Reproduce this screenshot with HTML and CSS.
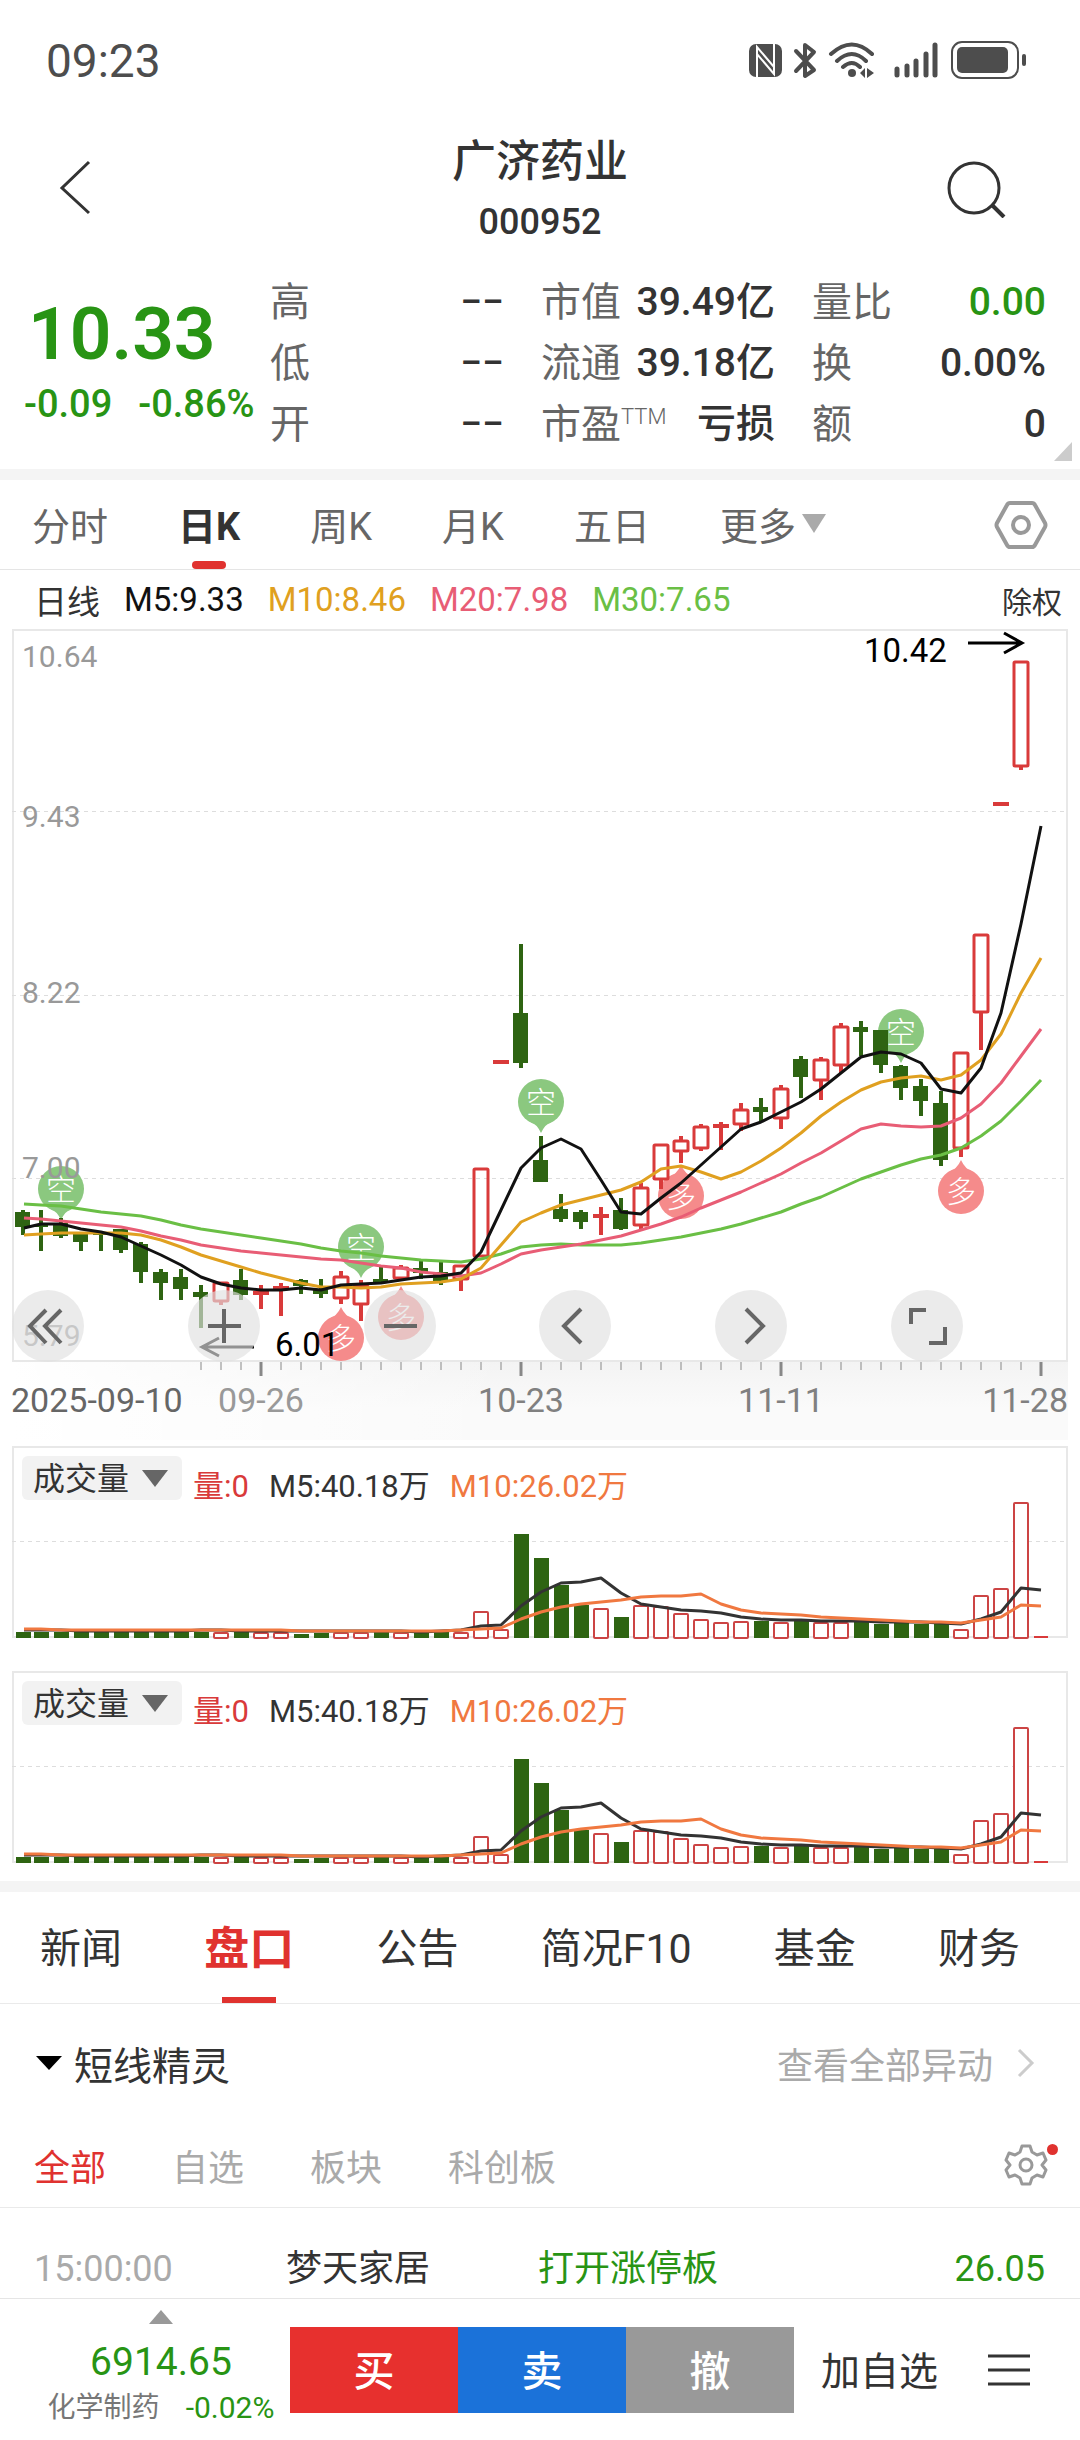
FILE: index.html
```
<!DOCTYPE html>
<html lang="zh-CN">
<head>
    <meta charset="UTF-8">
    <meta name="viewport" content="width=device-width, initial-scale=1.0">
    <title>广济药业 000952</title>
    <link rel="stylesheet" href="styles.css">
</head>
<body>
    <div class="status-bar">
        <span class="clock">09:23</span>
        <svg class="status-icons" width="280" height="42" viewBox="748 40 280 42" aria-hidden="true">
            <rect x="749" y="44" width="33" height="33" rx="7" fill="#4d4d4d"/>
            <path d="M757 78V47L774 67V54M774 43V74L757 54V67" fill="none" stroke="#fff" stroke-width="2"/>
            <path d="M796 51L814 70L805 76V45L814 52L796 71" fill="none" stroke="#4d4d4d" stroke-width="4" stroke-linejoin="round" stroke-linecap="round"/>
            <path d="M831 54Q852 35 872 54M837 61Q852 47 866 61M843 67Q852 59 860 67" fill="none" stroke="#4d4d4d" stroke-width="4" stroke-linecap="round"/>
            <circle cx="852" cy="73" r="4" fill="#4d4d4d"/>
            <path d="M860 73L865 68V78ZM867 68V78L874 73Z" fill="#4d4d4d"/>
            <path d="M897 69V75M907 66V75M916 61V75M926 54V75M935 45V75" stroke="#4d4d4d" stroke-width="5" stroke-linecap="round"/>
            <rect x="952" y="42" width="66" height="36" rx="10" fill="none" stroke="#4d4d4d" stroke-width="2"/>
            <rect x="957" y="47" width="51" height="26" rx="5" fill="#4d4d4d"/>
            <rect x="1022" y="54" width="4" height="12" rx="2" fill="#4d4d4d"/>
        </svg>
    </div>

    <header class="header">
        <button class="icon-button" aria-label="返回">
            <svg width="34" height="56" viewBox="0 0 34 56"><path d="M31 3L4 29L31 54" fill="none" stroke="#333" stroke-width="3"/></svg>
        </button>
        <div class="title">
            <h1>广济药业</h1>
            <p>000952</p>
        </div>
        <button class="icon-button" aria-label="搜索">
            <svg width="62" height="62" viewBox="0 0 62 62"><circle cx="28" cy="32" r="25" fill="none" stroke="#333" stroke-width="3"/><path d="M46 49L58 61" stroke="#333" stroke-width="4"/></svg>
        </button>
    </header>

    <section class="quote">
        <div class="price-box">
            <div class="price">10.33</div>
            <div class="change"><span>-0.09</span><span>-0.86%</span></div>
        </div>
        <dl class="stats">
            <div><dt>高</dt><dd>−−</dd></div>
            <div><dt>市值</dt><dd>39.49亿</dd></div>
            <div><dt>量比</dt><dd class="down">0.00</dd></div>
            <div><dt>低</dt><dd>−−</dd></div>
            <div><dt>流通</dt><dd>39.18亿</dd></div>
            <div><dt>换</dt><dd>0.00%</dd></div>
            <div><dt>开</dt><dd>−−</dd></div>
            <div><dt>市盈<sup>TTM</sup></dt><dd>亏损</dd></div>
            <div><dt>额</dt><dd>0</dd></div>
        </dl>
        <span class="corner"></span>
    </section>

    <nav class="period-tabs">
        <button>分时</button>
        <button class="active">日K</button>
        <button>周K</button>
        <button>月K</button>
        <button>五日</button>
        <button>更多<span class="caret"></span></button>
        <button class="settings" aria-label="设置">
            <svg width="54" height="50" viewBox="0 0 54 50"><path d="M16 3H38Q40 3 41 5L51 23Q52 25 51 27L41 45Q40 47 38 47H16Q14 47 13 45L3 27Q2 25 3 23L13 5Q14 3 16 3Z" fill="none" stroke="#999" stroke-width="4"/><circle cx="27" cy="25" r="8" fill="none" stroke="#999" stroke-width="4"/></svg>
        </button>
    </nav>

    <div class="ma-row">
        <span>日线</span>
        <span class="ma5">M5:9.33</span>
        <span class="ma10">M10:8.46</span>
        <span class="ma20">M20:7.98</span>
        <span class="ma30">M30:7.65</span>
        <button>除权</button>
    </div>

    <div class="chart">
        <svg id="kline" viewBox="12 629 1056 811"></svg>
        <div class="chart-tools">
            <button aria-label="最左"><svg viewBox="0 0 72 72"><path d="M34 20L18 36L34 53M49 20L33 36L49 53"/></svg></button>
            <button aria-label="放大"><svg viewBox="0 0 72 72"><path d="M20 36H53M36 19V53"/></svg></button>
            <button aria-label="缩小"><svg viewBox="0 0 72 72"><path d="M20 36H53"/></svg></button>
            <button aria-label="左移"><svg viewBox="0 0 72 72"><path d="M42 19L25 36L42 53"/></svg></button>
            <button aria-label="右移"><svg viewBox="0 0 72 72"><path d="M31 19L48 36L31 53"/></svg></button>
            <button aria-label="全屏"><svg viewBox="0 0 72 72"><path d="M20 34V20H35M54 37V53H38"/></svg></button>
        </div>
    </div>

    <div class="volume">
        <svg class="volume-chart" viewBox="12 1446 1056 194"></svg>
        <div class="volume-legend">
            <label class="picker"><select aria-label="指标"><option>成交量</option></select></label>
            <span class="vol">量:0</span>
            <span>M5:40.18万</span>
            <span class="vol10">M10:26.02万</span>
        </div>
    </div>
    <div class="volume">
        <svg class="volume-chart" viewBox="12 1446 1056 194"></svg>
        <div class="volume-legend">
            <label class="picker"><select aria-label="指标"><option>成交量</option></select></label>
            <span class="vol">量:0</span>
            <span>M5:40.18万</span>
            <span class="vol10">M10:26.02万</span>
        </div>
    </div>

    <nav class="info-tabs">
        <button>新闻</button>
        <button class="active">盘口</button>
        <button>公告</button>
        <button>简况F10</button>
        <button>基金</button>
        <button>财务</button>
    </nav>

    <div class="section-title">
        <span class="fold"></span>
        <h2>短线精灵</h2>
        <a href="#">查看全部异动
            <svg width="18" height="30" viewBox="0 0 18 30"><path d="M2 2L15 15L2 28" fill="none" stroke="#ccc" stroke-width="3"/></svg>
        </a>
    </div>

    <div class="filters">
        <button class="active">全部</button>
        <button>自选</button>
        <button>板块</button>
        <button>科创板</button>
        <button class="gear" aria-label="异动设置">
            <svg width="44" height="42" viewBox="0 0 44 42"><path d="M18 2H26L28 8L33 11L39 9L42 16L38 21L42 26L39 33L33 31L28 34L26 40H18L16 34L11 31L5 33L2 26L6 21L2 16L5 9L11 11L16 8Z" fill="none" stroke="#999" stroke-width="3" stroke-linejoin="round"/><circle cx="22" cy="21" r="6" fill="none" stroke="#999" stroke-width="3"/></svg>
        </button>
    </div>

    <table class="events">
        <tr>
            <td class="time">15:00:00</td>
            <td class="name">梦天家居</td>
            <td class="down">打开涨停板</td>
            <td class="down value">26.05</td>
        </tr>
    </table>

    <footer class="bottom-bar">
        <div class="sector">
            <span class="up-caret"></span>
            <span class="sector-value">6914.65</span>
            <span class="sector-name">化学制药 <b>-0.02%</b></span>
        </div>
        <div class="trade">
            <button class="buy">买</button>
            <button class="sell">卖</button>
            <button class="cancel">撤</button>
        </div>
        <button class="add">加自选</button>
        <button class="menu" aria-label="菜单">
            <svg width="42" height="34" viewBox="0 0 42 34"><path d="M0 3H42M0 17H42M0 31H42" stroke="#333" stroke-width="3"/></svg>
        </button>
    </footer>

    <script>
        const GREEN = '#2e6412';
        const RED = '#d93a3a';
        const x = i => 21 + i * 20;

        // type, body top, body bottom, high, low
        const candles = [
            ['g', 1212, 1227, 1210, 1235], ['g', 1225, 1227, 1210, 1251], ['g', 1223, 1236, 1218, 1238],
            ['g', 1233, 1242, 1232, 1251], ['g', 1233, 1235, 1233, 1251], ['g', 1229, 1250, 1229, 1253],
            ['g', 1244, 1272, 1242, 1283], ['g', 1272, 1283, 1269, 1300], ['g', 1277, 1289, 1269, 1300],
            ['g', 1292, 1297, 1285, 1328], ['r', 1282, 1302, 1282, 1305], ['g', 1280, 1295, 1269, 1300],
            ['r', 1291, 1295, 1285, 1309], ['r', 1286, 1289, 1283, 1316], ['g', 1280, 1286, 1279, 1294],
            ['g', 1290, 1294, 1279, 1298], ['r', 1276, 1299, 1271, 1304], ['r', 1285, 1305, 1280, 1321],
            ['g', 1279, 1283, 1267, 1284], ['r', 1267, 1279, 1265, 1280], ['g', 1268, 1273, 1261, 1279],
            ['g', 1272, 1281, 1262, 1285], ['r', 1265, 1280, 1265, 1291], ['r', 1168, 1257, 1168, 1257],
            ['r', 1060, 1064, 1060, 1064], ['g', 1013, 1063, 944, 1068], ['g', 1160, 1182, 1136, 1182],
            ['g', 1209, 1219, 1194, 1222], ['g', 1212, 1222, 1210, 1229], ['r', 1214, 1218, 1207, 1235],
            ['g', 1210, 1229, 1198, 1230], ['r', 1187, 1226, 1183, 1229], ['r', 1144, 1180, 1144, 1189],
            ['r', 1140, 1152, 1136, 1163], ['r', 1126, 1149, 1124, 1151], ['r', 1124, 1128, 1122, 1150],
            ['r', 1109, 1125, 1103, 1131], ['g', 1107, 1112, 1098, 1122], ['r', 1088, 1119, 1085, 1129],
            ['g', 1059, 1077, 1056, 1098], ['r', 1059, 1081, 1057, 1100], ['r', 1026, 1066, 1023, 1073],
            ['g', 1027, 1032, 1021, 1056], ['g', 1030, 1065, 1030, 1073], ['g', 1066, 1088, 1065, 1100],
            ['g', 1086, 1101, 1079, 1116], ['g', 1103, 1160, 1091, 1166], ['r', 1052, 1149, 1052, 1157],
            ['r', 934, 1013, 934, 1050], ['r', 802, 806, 802, 806], ['r', 661, 767, 661, 770]
        ];

        const averages = [
            ['#6abf45', [1204, 1205, 1206, 1209, 1212, 1214, 1216, 1220, 1225, 1229, 1232, 1235, 1238, 1241, 1244, 1248, 1251, 1253, 1256, 1258, 1260, 1261, 1262, 1259, 1254, 1247, 1245, 1244, 1245, 1245, 1245, 1243, 1240, 1237, 1233, 1229, 1224, 1218, 1212, 1204, 1197, 1188, 1179, 1172, 1165, 1159, 1155, 1148, 1136, 1121, 1101, 1080]],
            ['#e85d75', [1218, 1219, 1221, 1223, 1225, 1227, 1231, 1236, 1240, 1245, 1248, 1251, 1253, 1255, 1257, 1259, 1260, 1263, 1266, 1268, 1272, 1274, 1276, 1273, 1264, 1254, 1250, 1247, 1244, 1240, 1236, 1230, 1224, 1217, 1208, 1200, 1192, 1183, 1174, 1163, 1153, 1141, 1129, 1124, 1126, 1127, 1126, 1118, 1104, 1083, 1056, 1029]],
            ['#e0a020', [1235, 1234, 1233, 1233, 1233, 1233, 1235, 1240, 1247, 1255, 1261, 1267, 1273, 1278, 1283, 1287, 1287, 1288, 1287, 1284, 1283, 1282, 1279, 1268, 1245, 1222, 1213, 1205, 1200, 1195, 1190, 1182, 1169, 1166, 1172, 1179, 1172, 1161, 1148, 1133, 1116, 1102, 1090, 1082, 1078, 1076, 1080, 1075, 1060, 1034, 993, 958]],
            ['#111', [1228, 1224, 1224, 1229, 1232, 1237, 1246, 1255, 1265, 1277, 1284, 1288, 1290, 1290, 1288, 1290, 1285, 1284, 1283, 1280, 1277, 1276, 1273, 1252, 1210, 1168, 1148, 1139, 1149, 1180, 1212, 1214, 1198, 1183, 1165, 1147, 1129, 1122, 1112, 1102, 1089, 1073, 1057, 1052, 1054, 1063, 1089, 1093, 1068, 1013, 924, 826]]
        ];

        // candle index, circle center, side
        const markers = [
            [2, 1189, 'short'], [17, 1247, 'short'], [26, 1102, 'short'], [44, 1032, 'short'],
            [16, 1338, 'long'], [19, 1317, 'long'], [33, 1196, 'long'], [47, 1191, 'long']
        ];

        function line(points, color, width) {
            return `<polyline points="${points.map((y, i) => x(i) + 3 * (i === 0) + ',' + y).join(' ')}" fill="none" stroke="${color}" stroke-width="${width}" stroke-linejoin="round"/>`;
        }

        function drawCandle([type, top, bottom, high, low], i) {
            // the first candle is kept clear of the frame
            const cx = Math.max(x(i), 23);
            if (type === 'g') {
                return `<path d="M${cx} ${high}V${low}" stroke="${GREEN}" stroke-width="4"/>
                    <rect x="${cx - 8}" y="${top}" width="15" height="${bottom - top}" fill="${GREEN}"/>`;
            }
            const wicks = `<path d="M${cx} ${high}V${top}M${cx} ${bottom}V${low}" stroke="${RED}" stroke-width="4"/>`;
            if (bottom - top < 6) {
                return `${wicks}<rect x="${cx - 8}" y="${top}" width="16" height="${bottom - top}" fill="${RED}"/>`;
            }
            return `${wicks}<rect x="${cx - 7}" y="${top + 1}" width="14" height="${bottom - top - 2}" rx="1" fill="none" stroke="${RED}" stroke-width="3"/>`;
        }

        function drawMarker([i, cy, side]) {
            const cx = x(i);
            const d = side === 'short' ? 1 : -1;
            const color = side === 'short' ? '#8bc87f' : '#f58b8b';
            return `<circle cx="${cx}" cy="${cy}" r="23" fill="${color}"/>
                <path d="M${cx - 12} ${cy + 19 * d}Q${cx - 4} ${cy + 22 * d} ${cx} ${cy + 31 * d}Q${cx + 4} ${cy + 22 * d} ${cx + 12} ${cy + 19 * d}Z" fill="${color}"/>
                <text x="${cx}" y="${cy + 11}" class="marker">${side === 'short' ? '空' : '多'}</text>`;
        }

        function drawKline() {
            let s = `<defs>
                <linearGradient id="down" x2="0" y2="1"><stop stop-color="#f3f3f3"/><stop offset="0.6" stop-color="#fafafa"/><stop offset="1" stop-color="#fafafa"/></linearGradient>
                <linearGradient id="left"><stop stop-color="#fff"/><stop offset="1" stop-color="#fff" stop-opacity="0"/></linearGradient>
                </defs>
                <rect x="12" y="1361" width="1056" height="79" fill="url(#down)"/>
                <rect x="12" y="1361" width="500" height="79" fill="url(#left)"/>
                <rect x="13" y="630" width="1054" height="731" fill="#fff" stroke="#e8e8e8" stroke-width="2"/>`;
            [811, 995, 1178].forEach(y => {
                s += `<path d="M12 ${y}.5H1068" stroke="#ddd" stroke-dasharray="4 4"/>`;
            });
            for (let i = 9; i <= 51; i++) {
                const major = [12, 25, 38, 51].includes(i);
                s += `<path d="M${x(i)} 1362v${major ? 14 : 8}" stroke="#888" stroke-width="${major ? 3 : 1}"/>`;
            }
            s += markers.map(drawMarker).join('');
            s += candles.map(drawCandle).join('');
            s += averages.map(([color, points]) => line(points, color, 3)).join('');
            [['10.64', 667], ['9.43', 827], ['8.22', 1003], ['7.00', 1178], ['5.79', 1346]].forEach(([t, y]) => {
                s += `<text x="22" y="${y}" class="scale">${t}</text>`;
            });
            s += `<text x="864" y="662" class="peak">10.42</text>
                <path d="M968 643H1021M1004 633L1022 643L1004 653" fill="none" stroke="#000" stroke-width="3"/>
                <text x="275" y="1356" class="peak">6.01</text>
                <path d="M254 1347H202M219 1338L202 1347L219 1356" fill="none" stroke="#000" stroke-width="3"/>
                <text x="11" y="1412" class="date first">2025-09-10</text>
                <text x="261" y="1412" class="date light">09-26</text>
                <text x="521" y="1412" class="date">10-23</text>
                <text x="781" y="1412" class="date">11-11</text>
                <text x="1068" y="1412" class="date last">11-28</text>`;
            document.getElementById('kline').innerHTML = s;
        }

        const volumeTypes = 'ggggggggggrgrrggrrgrggrrrggggrgrrrrrrgrgrrgggggrrrrr';
        const volumes = [6, 6, 6, 6, 6, 6, 6, 6, 6, 6, 6, 6, 6, 6, 4, 5, 6, 6, 6, 6, 6, 6, 6, 27, 9, 104, 80, 53, 33, 30, 21, 33, 32, 25, 19, 16, 17, 17, 16, 19, 16, 16, 16, 14, 15, 14, 15, 9, 43, 50, 136, 2];
        const volume5 = [8, 8, 8, 7, 7, 7, 7, 7, 7, 8, 8, 7, 7, 7, 7, 7, 7, 7, 7, 7, 6, 7, 8, 12, 13, 32, 46, 55, 56, 60, 45, 34, 31, 28, 27, 25, 21, 19, 18, 18, 17, 17, 17, 16, 16, 16, 15, 14, 19, 26, 50, 48];
        const volume10 = [9, 9, 8, 8, 8, 8, 8, 8, 8, 8, 8, 8, 8, 8, 7, 7, 7, 7, 7, 7, 7, 7, 8, 9, 10, 19, 26, 31, 34, 36, 38, 41, 42, 42, 44, 34, 28, 25, 24, 23, 21, 20, 19, 18, 17, 16, 16, 15, 18, 21, 33, 32];

        function drawVolume(svg) {
            const base = 1638;
            let s = `<rect x="13" y="1447" width="1054" height="190" fill="none" stroke="#e8e8e8" stroke-width="2"/>
                <path d="M12 1541.5H1068" stroke="#ddd" stroke-dasharray="4 4"/>`;
            volumes.forEach((v, i) => {
                const left = Math.max(x(i), 23) - 7;
                if (volumeTypes[i] === 'g') {
                    s += `<rect x="${left}" y="${base - v}" width="15" height="${v}" fill="${GREEN}"/>`;
                } else if (v < 4) {
                    s += `<rect x="${left}" y="${base - v}" width="14" height="${v}" fill="${RED}"/>`;
                } else {
                    s += `<rect x="${left}" y="${base - v + 1}" width="14" height="${v - 1}" rx="1" fill="#fff" stroke="#cc4444" stroke-width="2"/>`;
                }
            });
            s += line(volume5.map(v => base - v), '#333', 3);
            s += line(volume10.map(v => base - v), '#f07840', 3);
            svg.innerHTML = s;
        }

        drawKline();
        document.querySelectorAll('.volume-chart').forEach(drawVolume);
    </script>
</body>
</html>
```
FILE: styles.css
```
* {
    box-sizing: border-box;
}
body {
    margin: 0;
    background: #fff;
    color: #333;
    font-family: Roboto, "Noto Sans CJK SC", sans-serif;
    font-size: 36px;
}
h1, h2, p, dl, dd {
    margin: 0;
    font-weight: 400;
}
button {
    padding: 0;
    border: none;
    background: none;
    color: inherit;
    font: inherit;
    cursor: pointer;
}
svg {
    display: block;
}
.down {
    color: #289414;
}
.status-bar {
    display: flex;
    justify-content: space-between;
    align-items: center;
    padding: 36px 52px 36px 46px;
}
.clock {
    font-size: 46px;
    line-height: 50px;
    color: #4d4d4d;
}
.header {
    display: flex;
    justify-content: space-between;
    align-items: flex-start;
    padding: 10px 72px 0 58px;
}
.icon-button {
    width: 62px;
    height: 110px;
}
.title {
    padding-left: 14px;
    text-align: center;
}
.title h1 {
    font-size: 44px;
    line-height: 60px;
    font-weight: 500;
}
.title p {
    line-height: 60px;
    font-weight: 500;
}
.quote {
    position: relative;
    display: flex;
    padding: 20px 34px 14px 24px;
    border-bottom: 11px solid #f4f4f4;
}
.price-box {
    flex: 0 0 246px;
    padding-top: 26px;
    color: #289414;
    font-weight: 500;
}
.price {
    padding-left: 4px;
    font-size: 73px;
    line-height: 72px;
    font-weight: 600;
}
.change {
    display: flex;
    gap: 26px;
    line-height: 68px;
    font-size: 38px;
    white-space: nowrap;
}
.stats {
    flex: 1;
    display: grid;
    grid-template-columns: repeat(3, 1fr);
    column-gap: 37px;
}
.stats div {
    display: flex;
    justify-content: space-between;
    height: 61px;
    line-height: 61px;
    white-space: nowrap;
}
.stats dt {
    font-size: 40px;
    color: #666;
}
.stats dd {
    font-size: 39px;
    font-weight: 500;
}
.stats sup {
    font-size: 22px;
    line-height: 22px;
    font-weight: 300;
}
.corner {
    position: absolute;
    right: 8px;
    bottom: 8px;
    border-left: 18px solid transparent;
    border-bottom: 19px solid #ccc;
}
.period-tabs {
    display: flex;
    align-items: center;
    gap: 70px;
    height: 90px;
    padding: 0 32px;
    border-bottom: 1px solid #e5e5e5;
    font-size: 38px;
    color: #666;
}
.period-tabs button {
    position: relative;
    display: flex;
    align-items: center;
    height: 89px;
    padding-bottom: 3px;
    white-space: nowrap;
}
.period-tabs .active {
    color: #333;
    font-weight: 700;
}
.period-tabs .active::after {
    content: "";
    position: absolute;
    left: 50%;
    bottom: 0;
    width: 34px;
    height: 8px;
    margin-left: -17px;
    border-radius: 4px;
    background: #e0322f;
}
.period-tabs .settings {
    margin-left: auto;
    padding-bottom: 0;
}
.caret {
    margin-left: 6px;
    border: 12px solid transparent;
    border-top: 19px solid #aaa;
    border-bottom: none;
}
.ma-row {
    display: flex;
    align-items: center;
    gap: 24px;
    height: 59px;
    padding: 0 18px 0 34px;
    font-size: 33px;
    white-space: nowrap;
}
.ma-row button {
    margin-left: auto;
    font-size: 30px;
}
.ma5 {
    color: #111;
}
.ma10 {
    color: #e0a020;
}
.ma20 {
    color: #e85d75;
}
.ma30 {
    color: #6abf45;
}
.chart {
    position: relative;
    margin: 0 12px 6px;
}
.scale {
    font-size: 30px;
    fill: #999;
}
.peak {
    font-size: 33px;
    fill: #000;
}
.date {
    font-size: 34px;
    fill: #808080;
    text-anchor: middle;
}
.date.first {
    fill: #666;
    text-anchor: start;
}
.date.light {
    fill: #999;
}
.date.last {
    text-anchor: end;
}
.marker {
    font-size: 30px;
    font-weight: 300;
    fill: #fff;
    text-anchor: middle;
}
.chart-tools {
    position: absolute;
    left: 0;
    right: 105px;
    bottom: 78px;
    display: flex;
    justify-content: space-between;
}
.chart-tools button {
    width: 72px;
    height: 72px;
    border-radius: 50%;
    background: rgba(224, 224, 224, 0.65);
}
.chart-tools path {
    fill: none;
    stroke: #666;
    stroke-width: 4;
}
.volume {
    position: relative;
    margin: 0 12px 31px;
}
.volume-legend {
    position: absolute;
    top: 10px;
    left: 10px;
    display: flex;
    gap: 20px;
    font-size: 31px;
    line-height: 62px;
    white-space: nowrap;
}
.picker {
    position: relative;
    width: 160px;
    height: 44px;
    margin-right: -9px;
}
.picker select {
    appearance: none;
    display: block;
    width: 160px;
    height: 44px;
    padding: 2px 11px 0;
    border: none;
    border-radius: 6px;
    background: #f2f2f2;
    color: #333;
    font: inherit;
    font-size: 32px;
    line-height: 42px;
}
.picker::after {
    content: "";
    position: absolute;
    top: 14px;
    right: 14px;
    border: 13px solid transparent;
    border-top: 17px solid #666;
    border-bottom: none;
    pointer-events: none;
}
.vol {
    color: #d93a3a;
}
.vol10 {
    color: #f07840;
}
.info-tabs {
    display: flex;
    justify-content: space-between;
    height: 123px;
    margin-top: -15px;
    padding: 0 60px 0 40px;
    border-top: 11px solid #f4f4f4;
    border-bottom: 1px solid #eaeaea;
    font-size: 41px;
}
.info-tabs button {
    position: relative;
    padding-bottom: 5px;
    white-space: nowrap;
}
.info-tabs .active {
    color: #e0322f;
    font-size: 45px;
    font-weight: 700;
}
.info-tabs .active::after {
    content: "";
    position: absolute;
    left: 50%;
    bottom: 0;
    width: 54px;
    height: 6px;
    margin-left: -27px;
    background: #e0322f;
}
.section-title {
    display: flex;
    align-items: center;
    height: 118px;
    padding: 0 45px 0 36px;
}
.fold {
    margin-right: 12px;
    border: 13px solid transparent;
    border-top: 14px solid #000;
    border-bottom: none;
}
.section-title h2 {
    font-size: 39px;
}
.section-title a {
    display: flex;
    align-items: center;
    gap: 24px;
    margin-left: auto;
    color: #aaa;
    text-decoration: none;
}
.filters {
    display: flex;
    align-items: center;
    gap: 66px;
    height: 86px;
    padding: 0 32px 0 34px;
    border-bottom: 1px solid #eaeaea;
    color: #aaa;
}
.filters .active {
    color: #e0322f;
}
.filters .gear {
    position: relative;
    margin-left: auto;
}
.gear::after {
    content: "";
    position: absolute;
    top: 0;
    right: -10px;
    width: 11px;
    height: 11px;
    border-radius: 50%;
    background: #e0322f;
}
.events {
    width: 100%;
    border-collapse: collapse;
    table-layout: fixed;
}
.events td {
    height: 90px;
    padding: 33px 0 0;
    line-height: 57px;
    white-space: nowrap;
}
.events .time {
    width: 286px;
    padding-left: 34px;
    color: #aaa;
}
.events .name {
    width: 252px;
}
.events .value {
    padding-right: 35px;
    text-align: right;
}
.bottom-bar {
    display: flex;
    align-items: center;
    height: 142px;
    padding-right: 50px;
    border-top: 1px solid #e5e5e5;
}
.sector {
    flex: 0 0 290px;
    display: flex;
    flex-direction: column;
    align-items: center;
    padding-left: 32px;
}
.up-caret {
    border: 12px solid transparent;
    border-bottom: 14px solid #999;
    border-top: none;
}
.sector-value {
    margin-top: 14px;
    font-size: 39px;
    line-height: 48px;
    color: #289414;
}
.sector-name {
    display: flex;
    gap: 26px;
    font-size: 28px;
    line-height: 44px;
    color: #777;
    white-space: nowrap;
}
.sector-name b {
    font-size: 30px;
    font-weight: 400;
    color: #289414;
}
.trade {
    flex: 1;
    display: flex;
    height: 86px;
    color: #fff;
    font-size: 41px;
    font-weight: 500;
}
.trade button {
    flex: 1;
    padding-bottom: 4px;
}
.buy {
    background: #e7302e;
}
.sell {
    background: #1b72d9;
}
.cancel {
    background: #999;
}
.add {
    margin: 0 50px 0 27px;
    padding-bottom: 4px;
    font-size: 39px;
    white-space: nowrap;
}
```
